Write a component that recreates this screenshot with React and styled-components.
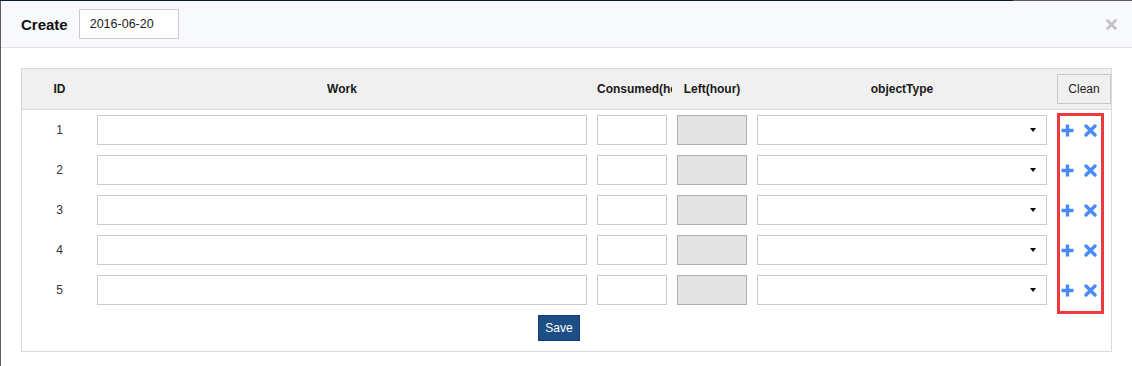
import React from 'react';
import styled, { createGlobalStyle } from 'styled-components';

const Global = createGlobalStyle`
  html, body { margin: 0; padding: 0; background: #fff; }
  body { font-family: "Liberation Sans", Arial, sans-serif; }
  * { box-sizing: border-box; }
`;

const Page = styled.div`
  width: 1132px;
  height: 366px;
  padding: 1px 0 0 1px;
  overflow: hidden;
  background: linear-gradient(to right, #071b30 1013px, #5b5b5b 1013px) top left / 100% 1px no-repeat, #5e5e5e;
`;

const Modal = styled.div`
  height: 365px;
  background: #fff;
  display: flex;
  flex-direction: column;
`;

const Header = styled.div`
  height: 47px;
  display: flex;
  align-items: center;
  padding: 0 15px 0 20px;
  background: #f8f9fd;
  border-bottom: 1px solid #e5e5e5;
`;

const Title = styled.h4`
  margin: 0 11px 0 0;
  font-size: 15px;
  font-weight: bold;
  color: #111;
`;

const DateInput = styled.input`
  width: 100px;
  height: 30px;
  border: 1px solid #ccc;
  background: #fff;
  padding: 0 0 0 10px;
  font-family: "Liberation Sans", Arial, sans-serif;
  font-size: 12.5px;
  color: #222;
  outline: none;
`;

const Close = styled.button`
  margin-left: auto;
  width: 11px;
  height: 11px;
  padding: 0;
  border: 0;
  background: none;
  display: flex;
`;

const Panel = styled.div`
  margin: 20px 20px 0 20px;
  border: 1px solid #dadada;
`;

const COLS = '75px 500px 80px 80px 300px';

const HeadRow = styled.div`
  display: grid;
  grid-template-columns: ${COLS} 1fr;
  align-items: center;
  height: 41px;
  background: #f0f0f0;
  border-bottom: 1px solid #dadada;
`;

const HeadCell = styled.div`
  width: ${p => p.$w}px;
  overflow: hidden;
  white-space: nowrap;
  text-align: ${p => p.$align || 'center'};
  font-size: 12px;
  font-weight: bold;
  color: #1a1a1a;
`;

const CleanButton = styled.button`
  width: 100%;
  height: 30px;
  border: 1px solid #c8c8c8;
  background: #f0f0f0;
  font-family: "Liberation Sans", Arial, sans-serif;
  font-size: 12px;
  color: #222;
  padding: 0;
`;

const Body = styled.div`
  padding: 5px 0 10px;
  display: flex;
  flex-direction: column;
`;

const BodyMain = styled.div`
  display: flex;
  align-items: flex-start;
`;

const Rows = styled.div`
  display: flex;
  flex-direction: column;
  gap: 10px;
  width: 1035px;
`;

const Row = styled.div`
  display: grid;
  grid-template-columns: ${COLS};
  align-items: center;
  height: 30px;
`;

const IdCell = styled.div`
  text-align: center;
  font-size: 12px;
  color: #333;
`;

const Field = styled.input`
  width: ${p => p.$w}px;
  height: 30px;
  border: 1px solid ${p => (p.readOnly ? '#adadad' : '#cccccc')};
  background: ${p => (p.readOnly ? '#e4e4e4' : '#fff')};
  outline: none;
  padding: 0 6px;
  font-family: "Liberation Sans", Arial, sans-serif;
  font-size: 12px;
`;

const Select = styled.div`
  width: 290px;
  height: 30px;
  border: 1px solid #cccccc;
  background: #fff;
  display: flex;
  align-items: center;
  justify-content: flex-end;
  padding-right: 10px;
`;

const Caret = styled.span`
  width: 0;
  height: 0;
  border-left: 3.5px solid transparent;
  border-right: 3.5px solid transparent;
  border-top: 4px solid #000;
`;

const ActionBox = styled.div`
  width: 47px;
  height: 201px;
  margin: -2px 0 -9px 0;
  border: 3px solid #ee3a3e;
  display: flex;
  flex-direction: column;
  gap: 12px;
`;

const ActionRow = styled.div`
  height: 28px;
  display: flex;
  align-items: center;
  gap: 10px;
  padding-left: 1px;
`;

const IconButton = styled.span`
  display: flex;
  width: 13px;
  height: 13px;
`;

const SaveRow = styled.div`
  display: flex;
  justify-content: center;
  padding-right: 15px;
  margin-top: 10px;
`;

const SaveButton = styled.button`
  width: 42px;
  height: 26px;
  padding: 0;
  border: 1px solid #163e6c;
  background: #1e4e86;
  color: #fff;
  font-family: "Liberation Sans", Arial, sans-serif;
  font-size: 12px;
`;

const PlusIcon = () => (
  <svg width="13" height="13" viewBox="0 0 13 13">
    <path d="M6.5 0.5V12.5M0.5 6.5H12.5" stroke="#4a8cf5" strokeWidth="3.4" fill="none" />
  </svg>
);

const CrossIcon = ({ color = '#4a8cf5', size = 13, w = 3.4 }) => (
  <svg width={size} height={size} viewBox="0 0 13 13">
    <path d="M2 2L11 11M11 2L2 11" stroke={color} strokeWidth={w} strokeLinecap="round" fill="none" />
  </svg>
);

const rows = [1, 2, 3, 4, 5];

export default function App() {
  return (
    <>
      <Global />
      <Page>
        <Modal>
          <Header>
            <Title>Create</Title>
            <DateInput defaultValue="2016-06-20" />
            <Close aria-label="close">
              <svg width="11" height="11" viewBox="0 0 11 11">
                <path d="M1.5 1.5L9.5 9.5M9.5 1.5L1.5 9.5" stroke="#c4c4c4" strokeWidth="2.8" strokeLinecap="round" fill="none" />
              </svg>
            </Close>
          </Header>
          <Panel>
            <HeadRow>
              <HeadCell $w={75}>ID</HeadCell>
              <HeadCell $w={490}>Work</HeadCell>
              <HeadCell $w={75} $align="left">Consumed(hour)</HeadCell>
              <HeadCell $w={70}>Left(hour)</HeadCell>
              <HeadCell $w={290}>objectType</HeadCell>
              <CleanButton>Clean</CleanButton>
            </HeadRow>
            <Body>
              <BodyMain>
                <Rows>
                  {rows.map(n => (
                    <Row key={n}>
                      <IdCell>{n}</IdCell>
                      <Field $w={490} />
                      <Field $w={70} />
                      <Field $w={70} readOnly />
                      <Select><Caret /></Select>
                    </Row>
                  ))}
                </Rows>
                <ActionBox>
                  {rows.map(n => (
                    <ActionRow key={n}>
                      <IconButton><PlusIcon /></IconButton>
                      <IconButton><CrossIcon /></IconButton>
                    </ActionRow>
                  ))}
                </ActionBox>
              </BodyMain>
              <SaveRow>
                <SaveButton>Save</SaveButton>
              </SaveRow>
            </Body>
          </Panel>
        </Modal>
      </Page>
    </>
  );
}
